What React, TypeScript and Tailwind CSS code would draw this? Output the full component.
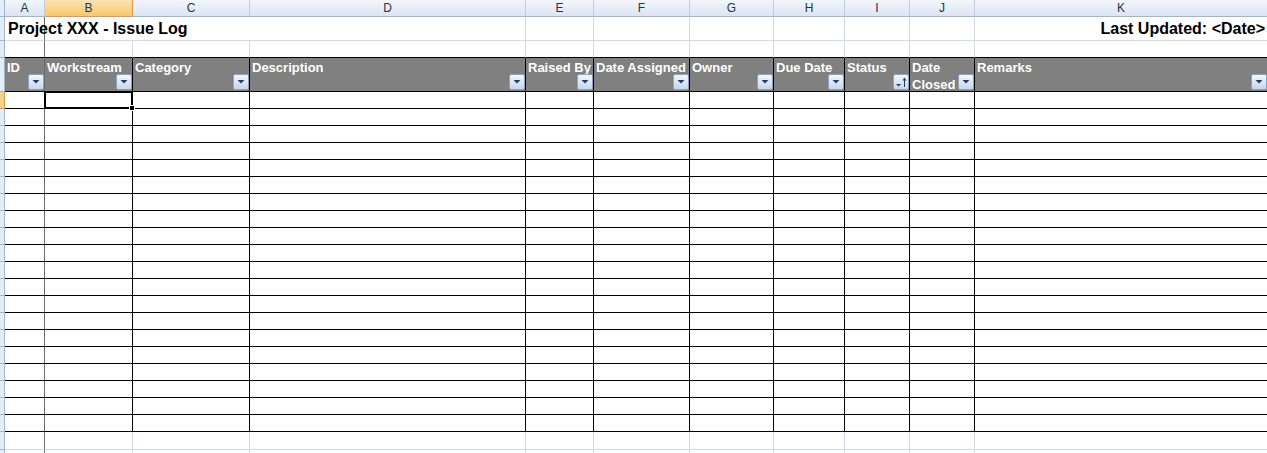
import React from 'react';

type Col = { id: string; w: string; label: string; sorted?: boolean };

const cols: Col[] = [
  { id: 'A', w: 'w-[40px]', label: 'ID' },
  { id: 'B', w: 'w-[88px]', label: 'Workstream' },
  { id: 'C', w: 'w-[117px]', label: 'Category' },
  { id: 'D', w: 'w-[276px]', label: 'Description' },
  { id: 'E', w: 'w-[68px]', label: 'Raised By' },
  { id: 'F', w: 'w-[96px]', label: 'Date Assigned' },
  { id: 'G', w: 'w-[84px]', label: 'Owner' },
  { id: 'H', w: 'w-[71px]', label: 'Due Date' },
  { id: 'I', w: 'w-[65px]', label: 'Status', sorted: true },
  { id: 'J', w: 'w-[65px]', label: 'Date Closed' },
  { id: 'K', w: 'w-[292px]', label: 'Remarks' },
];

// vertical line on the right of a cell
function rightLine(id: string, dark: boolean) {
  if (id === 'A') return 'border-r border-r-[#6b6b6b]';
  if (id === 'K') return '';
  return dark ? 'border-r border-r-black' : 'border-r border-r-[#d0d7e5]';
}

function RowHead({ h, active }: { h: string; active?: boolean }) {
  return (
    <div
      className={`${h} w-[5px] shrink-0 border-r border-b ${
        active ? 'bg-[#f8d18a] border-r-[#f29536] border-b-[#f29536]' : 'bg-[#e4ecf7] border-r-[#9eb6ce] border-b-[#9eb6ce]'
      }`}
    />
  );
}

function FilterButton({ sorted }: { sorted?: boolean }) {
  return (
    <span className="absolute right-0 bottom-px w-[16px] h-[16px] border border-[#8aa4c8] rounded-[2px] bg-gradient-to-b from-[#f4f7fc] to-[#c8d6ea] flex items-center justify-center">
      {sorted ? (
        <svg width="14" height="14" viewBox="0 0 14 14">
          <polygon points="2,9 7,9 4.5,11.5" fill="#1f3c78" />
          <line x1="10.5" y1="4" x2="10.5" y2="12" stroke="#1f3c78" strokeWidth="1" />
          <polygon points="8.5,5.5 12.5,5.5 10.5,2.5" fill="#1f3c78" />
        </svg>
      ) : (
        <svg width="8" height="6" viewBox="0 0 8 6">
          <polygon points="0.5,1 7.5,1 4,4.5" fill="#1f3c78" />
        </svg>
      )}
    </span>
  );
}

function GridRow({ h, bottomDark }: { h: string; bottomDark?: boolean }) {
  return (
    <div className="flex">
      <RowHead h={h} />
      {cols.map((c) => (
        <div
          key={c.id}
          className={`${c.w} ${h} shrink-0 border-b ${bottomDark ? 'border-b-black' : 'border-b-[#d0d7e5]'} ${rightLine(c.id, false)}`}
        />
      ))}
    </div>
  );
}

function DataRow({ active }: { active?: boolean }) {
  return (
    <div className="flex">
      <RowHead h="h-[17px]" active={active} />
      {cols.map((c) => (
        <div key={c.id} className={`relative ${c.w} h-[17px] shrink-0 border-b border-b-black ${rightLine(c.id, true)}`}>
          {active && c.id === 'B' && (
            <>
              <div className="absolute -left-px -top-px w-[89px] h-[18px] border-2 border-black z-10" />
              <div className="absolute -right-[3px] -bottom-[3px] w-[6px] h-[6px] bg-black border border-white z-20" />
            </>
          )}
        </div>
      ))}
    </div>
  );
}

export default function App() {
  return (
    <div className="relative w-[1267px] h-[453px] overflow-hidden bg-white font-['Liberation_Sans',Arial,sans-serif]">
      {/* Column letters */}
      <div className="flex">
        <div className="w-[5px] h-[17px] shrink-0 bg-[#e4ecf7] border-r border-b border-[#9eb6ce]" />
        {cols.map((c) => (
          <div
            key={c.id}
            className={`${c.w} h-[17px] shrink-0 flex items-center justify-center text-[12px] border-b ${
              c.id === 'B'
                ? 'bg-gradient-to-b from-[#fbe3b3] to-[#f6c86e] border-b-[#f29536] border-r border-r-[#f29536]'
                : `bg-gradient-to-b from-[#f3f6fb] to-[#dce5f2] border-b-[#9eb6ce] ${c.id === 'K' ? '' : 'border-r border-r-[#c0cee0]'}`
            } text-[#27334a]`}
          >
            {c.id}
          </div>
        ))}
      </div>

      {/* Row 1: title */}
      <div className="flex">
        <RowHead h="h-[24px]" />
        {cols.map((c) => (
          <div
            key={c.id}
            className={`relative ${c.w} h-[24px] shrink-0 border-b border-b-[#d0d7e5] ${
              c.id === 'B' || c.id === 'C' ? '' : rightLine(c.id, false)
            } flex items-end pb-[2px] ${c.id === 'K' ? 'justify-end pr-[2px]' : 'pl-[3px]'}`}
          >
            {c.id === 'A' && (
              <span className="relative z-10 whitespace-nowrap text-[16px] leading-[18px] font-bold text-black">
                Project XXX - Issue Log
              </span>
            )}
            {c.id === 'K' && (
              <span className="whitespace-nowrap text-[16px] leading-[18px] font-bold text-black">Last Updated: &lt;Date&gt;</span>
            )}
          </div>
        ))}
      </div>

      {/* Row 2 */}
      <GridRow h="h-[17px]" bottomDark />

      {/* Header row */}
      <div className="flex">
        <RowHead h="h-[34px]" />
        {cols.map((c) => (
          <div
            key={c.id}
            className={`relative ${c.w} h-[34px] shrink-0 bg-[#808080] border-b border-b-black ${rightLine(c.id, true)} pl-[2px] pt-px text-[13px] leading-[17px] font-bold text-white`}
          >
            {c.id === 'J' ? (
              <>
                Date
                <br />
                Closed
              </>
            ) : (
              <span className="whitespace-nowrap">{c.label}</span>
            )}
            <FilterButton sorted={c.sorted} />
          </div>
        ))}
      </div>

      {/* Data rows */}
      {Array.from({ length: 20 }).map((_, i) => (
        <DataRow key={i} active={i === 0} />
      ))}

      <GridRow h="h-[18px]" />
      <GridRow h="h-[17px]" />
    </div>
  );
}
